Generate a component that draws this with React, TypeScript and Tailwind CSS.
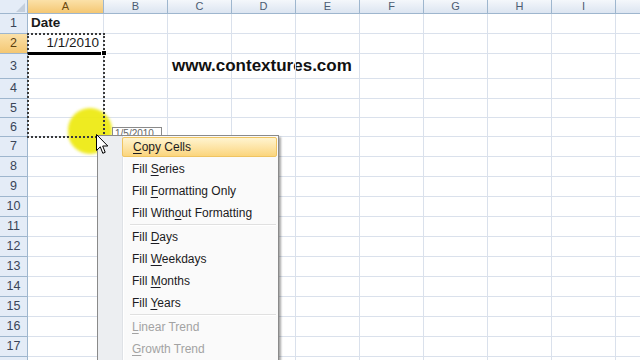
import React from "react";

const cols = ["A", "B", "C", "D", "E", "F", "G", "H", "I", "J"];
const rowHeights = ["h-[20px]", "h-[20px]", "h-[25px]", "h-[20px]", "h-[19px]", "h-[19px]", "h-[20px]", "h-[20px]", "h-[20px]", "h-[20px]", "h-[20px]", "h-[20px]", "h-[20px]", "h-[20px]", "h-[20px]", "h-[20px]", "h-[20px]", "h-[20px]"];

type Item = { pre: string; key: string; post: string; hot?: boolean; off?: boolean; sep?: boolean };

const items: Item[] = [
  { pre: "", key: "C", post: "opy Cells", hot: true },
  { pre: "Fill ", key: "S", post: "eries" },
  { pre: "Fill ", key: "F", post: "ormatting Only" },
  { pre: "Fill With", key: "o", post: "ut Formatting", sep: true },
  { pre: "Fill ", key: "D", post: "ays" },
  { pre: "Fill ", key: "W", post: "eekdays" },
  { pre: "Fill ", key: "M", post: "onths" },
  { pre: "Fill ", key: "Y", post: "ears", sep: true },
  { pre: "", key: "L", post: "inear Trend", off: true },
  { pre: "", key: "G", post: "rowth Trend", off: true },
];

function Cell({ col, row }: { col: string; row: number }) {
  const w = col === "A" ? "w-[76px]" : "w-[64px]";
  let content: React.ReactNode = null;
  if (col === "A" && row === 1) content = <span className="pl-[3px] font-bold">Date</span>;
  if (col === "A" && row === 2) content = <span className="ml-auto pr-[4px]">1/1/2010</span>;
  if (col === "C" && row === 3)
    content = (
      <span className="pl-[4px] whitespace-nowrap text-[17px] font-bold text-[#111]">www.contextures.com</span>
    );
  return (
    <div className={`${w} shrink-0 flex items-center border-r border-b border-[#dae1ec] overflow-visible`}>
      {content}
    </div>
  );
}

export default function App() {
  return (
    <div className="relative w-[640px] h-[360px] overflow-hidden bg-white font-['Liberation_Sans',Arial,sans-serif] text-[13.5px] text-[#1a1a1a]">
      {/* column headers */}
      <div className="flex h-[14px]">
        <div className="relative w-[28px] shrink-0 bg-[#e4ecf7] border-r border-b border-[#9eb6ce]">
          <div className="absolute right-[2px] bottom-[1px] w-0 h-0 border-l-[9px] border-l-transparent border-b-[9px] border-b-[#c4cfdd]" />
        </div>
        {cols.map((c) => (
          <div
            key={c}
            className={`${c === "A" ? "w-[76px] bg-gradient-to-b from-[#fbe1a8] to-[#f4c772] text-[#6b4a12]" : "w-[64px] bg-gradient-to-b from-[#f4f7fb] to-[#dce5f1] text-[#4b5b72]"} shrink-0 flex items-center justify-center border-r border-b border-[#9eb6ce] text-[11px] leading-none`}
          >
            {c === "J" ? "" : c}
          </div>
        ))}
      </div>
      {rowHeights.map((h, i) => (
        <div key={i} className={`flex ${h}`}>
          <div
            className={`w-[28px] shrink-0 flex items-center justify-center border-r border-b border-[#9eb6ce] text-[12.5px] ${i === 1 ? "bg-gradient-to-b from-[#fbe1a8] to-[#f4c772] text-[#5a3e10]" : "bg-[#e4ecf7] text-[#3a4558]"}`}
          >
            {i < 17 ? i + 1 : ""}
          </div>
          {cols.map((c) => (
            <Cell key={c} col={c} row={i + 1} />
          ))}
        </div>
      ))}

      {/* yellow pointer highlight */}
      <div className="absolute left-[68px] top-[108px] w-[44px] h-[46px] rounded-full bg-[#eeea16] blur-[1.5px] opacity-95" />

      {/* fill range border */}
      <div className="absolute left-[27px] top-[33px] w-[78px] h-[105px] border-2 border-dotted border-[#3a3a3a]" />
      {/* active cell bottom */}
      <div className="absolute left-[28px] top-[52px] w-[76px] h-[3px] bg-black" />
      <div className="absolute left-[101px] top-[50px] w-[6px] h-[6px] bg-black border border-white" />

      {/* fill tooltip */}
      <div className="absolute left-[112px] top-[127px] w-[50px] h-[14px] bg-white border border-[#8a8a8a] text-[10px] leading-[12px] text-[#666] pl-[2px]">
        1/5/2010
      </div>

      {/* context menu */}
      <div className="absolute left-[97px] top-[135px] w-[182px] h-[240px] flex bg-[#fafafa] border border-[#8a8a8a] shadow-[2px_2px_2px_rgba(0,0,0,0.35)] text-[12px] text-[#1b1b22]">
        <div className="w-[25px] shrink-0 bg-[#eceef1] border-r border-[#dfe2e6]" />
        <div className="flex-1 flex flex-col border-l border-white">
          {items.map((it, i) => (
            <React.Fragment key={i}>
              <div className="h-[22px] flex items-center py-[1px] pr-[1px]">
                <div
                  className={`flex-1 h-full flex items-center pl-[8px] rounded-[2px] whitespace-pre ${it.hot ? "-ml-[2px] pl-[10px] bg-gradient-to-b from-[#fff4cf] to-[#fbd57c] border border-[#efc462]" : ""} ${it.off ? "text-[#a3a3a3]" : ""}`}
                >
                  <span>
                    {it.pre}
                    <span className="underline underline-offset-2">{it.key}</span>
                    {it.post}
                  </span>
                </div>
              </div>
              {it.sep && (
                <div className="h-[2px] ml-[6px] mr-[2px] border-t border-[#e0e0e0] border-b border-b-white" />
              )}
            </React.Fragment>
          ))}
        </div>
      </div>

      {/* mouse pointer */}
      <svg className="absolute left-[96px] top-[134px]" width="13" height="21" viewBox="0 0 13 21">
        <path d="M0.5 0.5 L0.5 16.5 L4.3 12.8 L6.8 19.3 L9.2 18.3 L6.7 12 L11.8 12 Z" fill="white" stroke="black" strokeWidth="1" strokeLinejoin="round" />
      </svg>
    </div>
  );
}
